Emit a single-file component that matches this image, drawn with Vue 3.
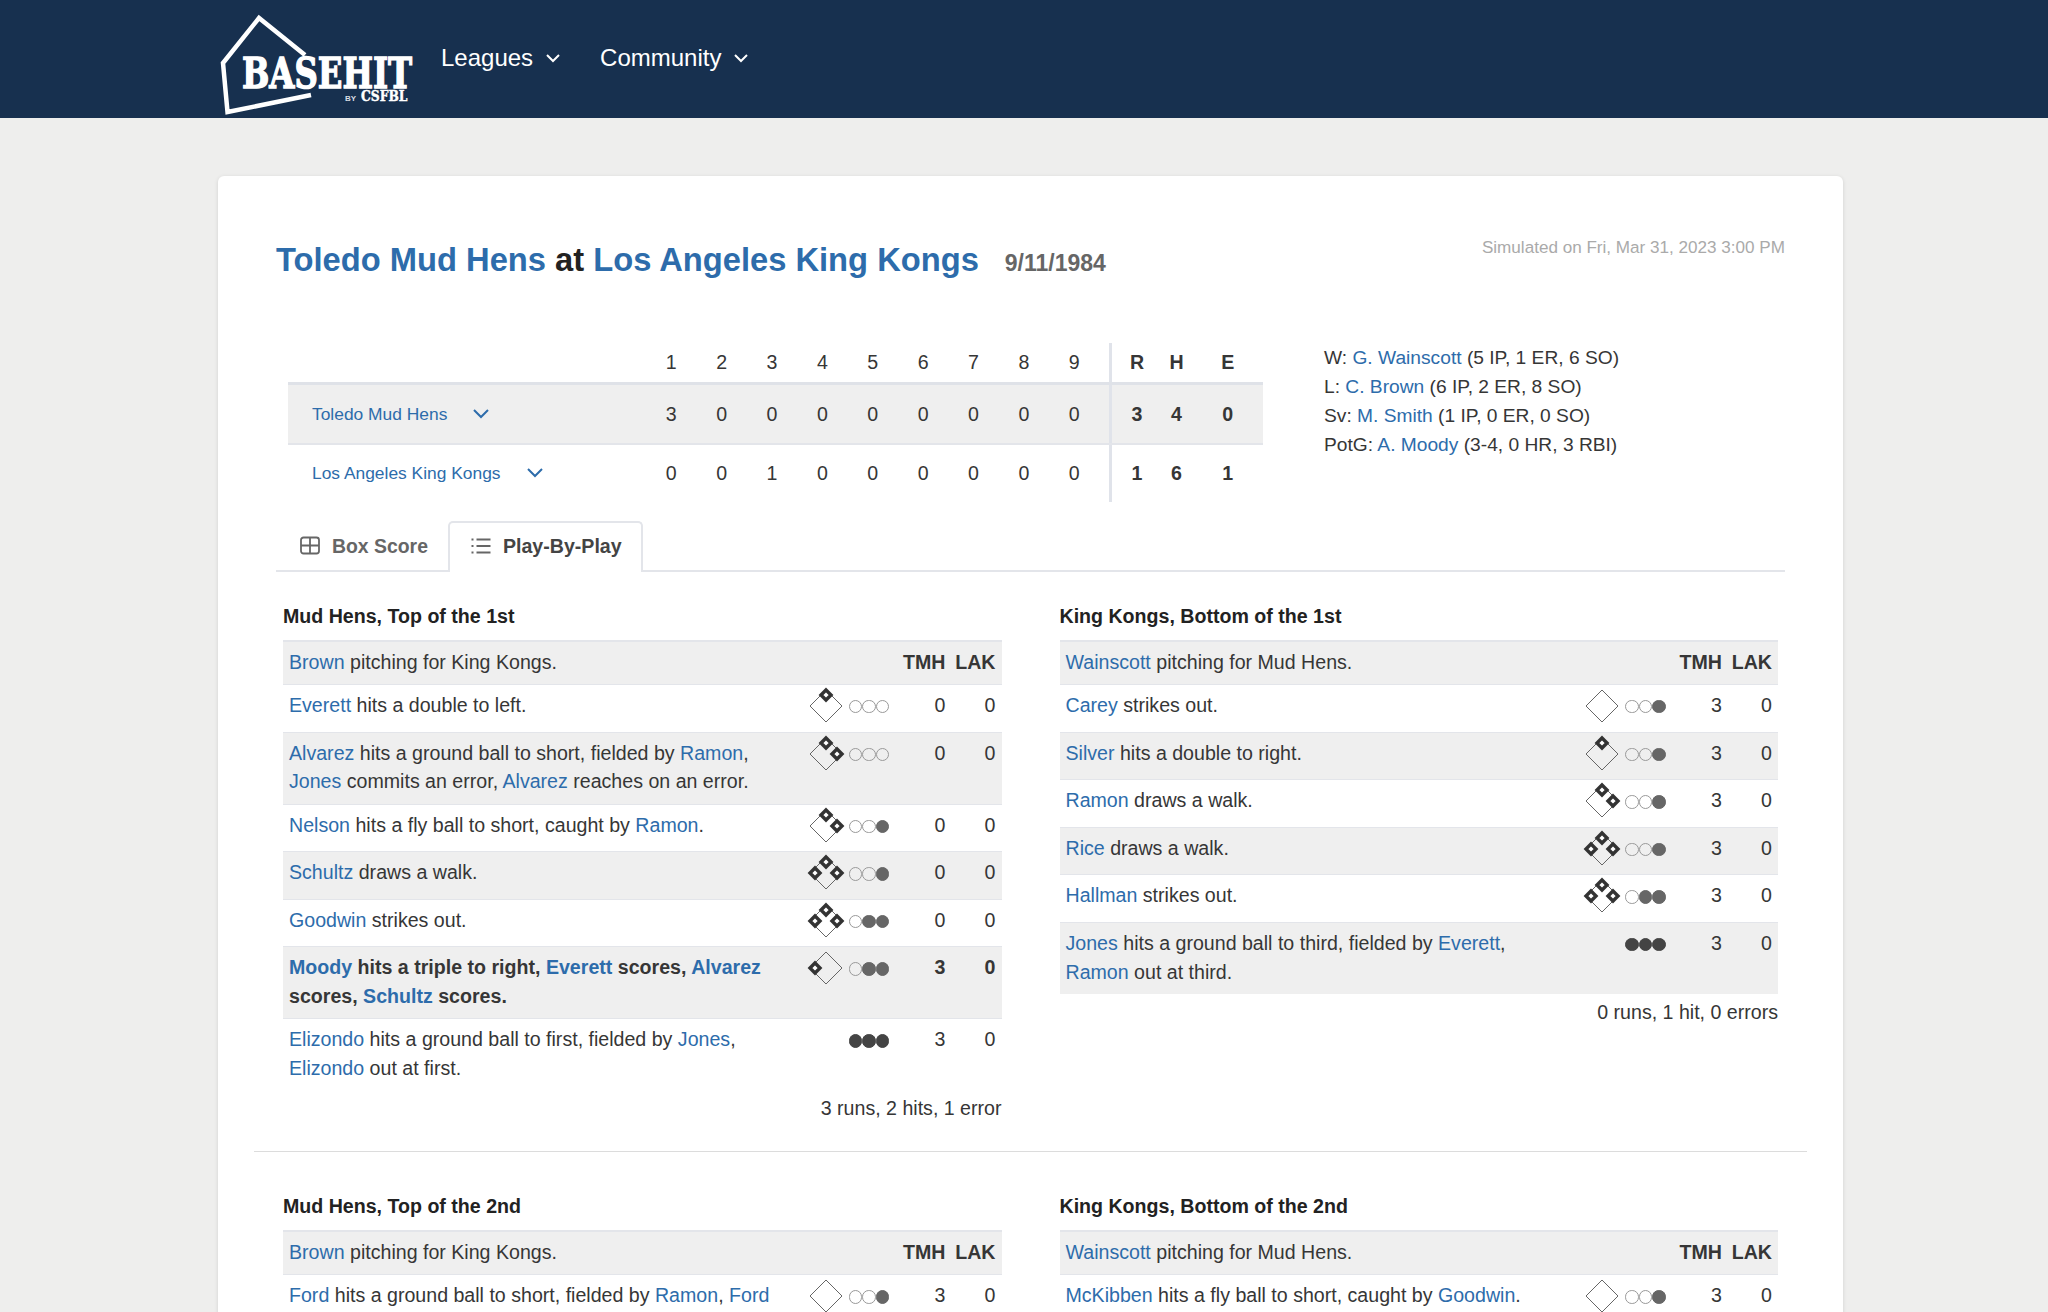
<script setup>
const innings = [1, 2, 3, 4, 5, 6, 7, 8, 9]

const teams = [
  { name: 'Toledo Mud Hens', scores: [3, 0, 0, 0, 0, 0, 0, 0, 0], totals: [3, 4, 0] },
  { name: 'Los Angeles King Kongs', scores: [0, 0, 1, 0, 0, 0, 0, 0, 0], totals: [1, 6, 1] }
]

const pitchers = [
  { label: 'W:', name: 'G. Wainscott', line: '(5 IP, 1 ER, 6 SO)' },
  { label: 'L:', name: 'C. Brown', line: '(6 IP, 2 ER, 8 SO)' },
  { label: 'Sv:', name: 'M. Smith', line: '(1 IP, 0 ER, 0 SO)' },
  { label: 'PotG:', name: 'A. Moody', line: '(3-4, 0 HR, 3 RBI)' }
]

// bases: 1 first, 2 second, 3 third. bases null hides the diamond
const sections = [
  [
    {
      title: 'Mud Hens, Top of the 1st',
      pitcher: '[Brown] pitching for King Kongs.',
      rows: [
        { text: '[Everett] hits a double to left.', bases: [2], outs: 0, a: 0, b: 0 },
        { text: '[Alvarez] hits a ground ball to short, fielded by [Ramon], [Jones] commits an error, [Alvarez] reaches on an error.', bases: [1, 2], outs: 0, a: 0, b: 0 },
        { text: '[Nelson] hits a fly ball to short, caught by [Ramon].', bases: [1, 2], outs: 1, a: 0, b: 0 },
        { text: '[Schultz] draws a walk.', bases: [1, 2, 3], outs: 1, a: 0, b: 0 },
        { text: '[Goodwin] strikes out.', bases: [1, 2, 3], outs: 2, a: 0, b: 0 },
        { text: '[Moody] hits a triple to right, [Everett] scores, [Alvarez] scores, [Schultz] scores.', bases: [3], outs: 2, a: 3, b: 0, bold: true },
        { text: '[Elizondo] hits a ground ball to first, fielded by [Jones], [Elizondo] out at first.', bases: null, outs: 3, a: 3, b: 0 }
      ],
      summary: '3 runs, 2 hits, 1 error'
    },
    {
      title: 'King Kongs, Bottom of the 1st',
      pitcher: '[Wainscott] pitching for Mud Hens.',
      rows: [
        { text: '[Carey] strikes out.', bases: [], outs: 1, a: 3, b: 0 },
        { text: '[Silver] hits a double to right.', bases: [2], outs: 1, a: 3, b: 0 },
        { text: '[Ramon] draws a walk.', bases: [1, 2], outs: 1, a: 3, b: 0 },
        { text: '[Rice] draws a walk.', bases: [1, 2, 3], outs: 1, a: 3, b: 0 },
        { text: '[Hallman] strikes out.', bases: [1, 2, 3], outs: 2, a: 3, b: 0 },
        { text: '[Jones] hits a ground ball to third, fielded by [Everett], [Ramon] out at third.', bases: null, outs: 3, a: 3, b: 0 }
      ],
      summary: '0 runs, 1 hit, 0 errors'
    }
  ],
  [
    {
      title: 'Mud Hens, Top of the 2nd',
      pitcher: '[Brown] pitching for King Kongs.',
      rows: [
        { text: '[Ford] hits a ground ball to short, fielded by [Ramon], [Ford] out at first.', bases: [], outs: 1, a: 3, b: 0 }
      ]
    },
    {
      title: 'King Kongs, Bottom of the 2nd',
      pitcher: '[Wainscott] pitching for Mud Hens.',
      rows: [
        { text: '[McKibben] hits a fly ball to short, caught by [Goodwin].', bases: [], outs: 1, a: 3, b: 0 }
      ]
    }
  ]
]

const basePoints = { 1: [30, 19], 2: [19, 8], 3: [8, 19] }

const parts = (text) =>
  text.split(/(\[[^\]]+\])/).filter(Boolean).map((p) =>
    p[0] === '[' ? { link: true, value: p.slice(1, -1) } : { link: false, value: p }
  )

const diamond = ([x, y], r) => `${x},${y - r} ${x + r},${y} ${x},${y + r} ${x - r},${y}`
</script>

<template>
  <header class="topbar">
    <svg class="logo" viewBox="0 0 200 118" width="200" height="118">
      <polyline class="house" points="93,95 9.500,112 5,63 41,18 87,55" />
      <text class="logo-main" transform="translate(24,88) scale(0.77,1)">BASEHIT</text>
      <text class="logo-by" x="127" y="101">BY</text>
      <text class="logo-csfbl" transform="translate(143,101) scale(0.88,1)">CSFBL</text>
    </svg>
    <nav class="nav">
      <a class="nav-item">Leagues
        <svg width="16" height="10" viewBox="0 0 16 10"><path d="M2 2l6 6 6-6" /></svg>
      </a>
      <a class="nav-item">Community
        <svg width="16" height="10" viewBox="0 0 16 10"><path d="M2 2l6 6 6-6" /></svg>
      </a>
    </nav>
  </header>

  <main class="card">
    <div class="title-row">
      <h1 class="title">
        <a>Toledo Mud Hens</a> at <a>Los Angeles King Kongs</a>
        <span class="date">9/11/1984</span>
      </h1>
      <div class="simulated">Simulated on Fri, Mar 31, 2023 3:00 PM</div>
    </div>

    <div class="score-area">
      <div class="scoreboard">
        <div class="score-line score-head">
          <div></div>
          <div v-for="i in innings" :key="i" class="cell">{{ i }}</div>
          <div class="total-first cell strong">R</div>
          <div class="cell strong">H</div>
          <div class="cell strong total-last">E</div>
        </div>
        <div v-for="team in teams" :key="team.name" class="score-line score-team">
          <div class="team-name">
            <a>{{ team.name }}</a>
            <svg width="18" height="12" viewBox="0 0 18 12"><path d="M2 2l7 7 7-7" /></svg>
          </div>
          <div v-for="(s, i) in team.scores" :key="i" class="cell">{{ s }}</div>
          <div class="total-first cell strong">{{ team.totals[0] }}</div>
          <div class="cell strong">{{ team.totals[1] }}</div>
          <div class="cell strong total-last">{{ team.totals[2] }}</div>
        </div>
      </div>
      <div class="pitchers">
        <div v-for="p in pitchers" :key="p.label">{{ p.label }} <a>{{ p.name }}</a> {{ p.line }}</div>
      </div>
    </div>

    <div class="tabs">
      <a class="tab">
        <svg width="20" height="20" viewBox="0 0 20 20">
          <rect x="1" y="1.500" width="18" height="16" rx="2.500" />
          <path d="M1 9.500h18M10 1.500v16" />
        </svg>
        Box Score
      </a>
      <a class="tab tab-active">
        <svg width="20" height="20" viewBox="0 0 20 20">
          <path d="M5.500 3.500h14M5.500 10h14M5.500 16.500h14M0.500 3.500h2M0.500 10h2M0.500 16.500h2" />
        </svg>
        Play-By-Play
      </a>
    </div>

    <template v-for="(inning, n) in sections" :key="n">
      <hr v-if="n > 0" class="divider" />
      <div class="inning">
        <section v-for="half in inning" :key="half.title" class="half">
          <h3 class="half-title">{{ half.title }}</h3>
          <div class="play play-head">
            <div class="play-text">
              <template v-for="(p, i) in parts(half.pitcher)" :key="i"><a v-if="p.link">{{ p.value }}</a><template v-else>{{ p.value }}</template></template>
            </div>
            <div></div>
            <div class="num">TMH</div>
            <div class="num">LAK</div>
          </div>
          <div v-for="(row, r) in half.rows" :key="r" class="play" :class="{ striped: r % 2 === 1, bold: row.bold }">
            <div class="play-text">
              <template v-for="(p, i) in parts(row.text)" :key="i"><a v-if="p.link">{{ p.value }}</a><template v-else>{{ p.value }}</template></template>
            </div>
            <div class="situation">
              <svg class="bases" width="38" height="38" viewBox="0 0 38 38">
                <template v-if="row.bases">
                  <polygon class="infield" points="19,3 35,19 19,35 3,19" />
                  <polygon v-for="b in row.bases" :key="b" class="base" :points="diamond(basePoints[b], 5)" />
                </template>
              </svg>
              <div class="outs">
                <span v-for="o in 3" :key="o" class="out" :class="{ on: o > 3 - row.outs, all: row.outs === 3 }"></span>
              </div>
            </div>
            <div class="num">{{ row.a }}</div>
            <div class="num">{{ row.b }}</div>
          </div>
          <div v-if="half.summary" class="summary">{{ half.summary }}</div>
        </section>
      </div>
    </template>
  </main>
</template>

<style>
html, body {
  margin: 0;
  height: 1312px;
  overflow: hidden;
  background: #eeeeed;
}
</style>

<style scoped>
.topbar {
  display: flex;
  align-items: center;
  height: 118px;
  padding-left: 218px;
  background: #17304f;
  font-family: "Liberation Sans", Arial, sans-serif;
}

.logo {
  display: block;
}

.house {
  fill: none;
  stroke: #fff;
  stroke-width: 4.500;
}

.logo-main {
  font-family: "DejaVu Serif", serif;
  font-weight: 700;
  font-size: 42px;
  fill: #fff;
  stroke: #fff;
  stroke-width: 1.400;
}

.logo-by {
  font-family: "Liberation Sans", sans-serif;
  font-size: 8px;
  font-weight: 700;
  fill: #d8dde3;
}

.logo-csfbl {
  font-family: "DejaVu Serif", serif;
  font-size: 14px;
  font-weight: 700;
  fill: #fff;
  stroke: #fff;
  stroke-width: 0.400;
}

.nav {
  display: flex;
  gap: 39px;
  margin-left: 23px;
  margin-bottom: 2px;
}

.nav-item {
  display: flex;
  align-items: center;
  gap: 12px;
  color: #fff;
  font-size: 24px;
}

.nav-item svg path {
  fill: none;
  stroke: #fff;
  stroke-width: 2;
}

.card {
  width: 1625px;
  box-sizing: border-box;
  margin: 58px 0 0 218px;
  padding: 58px 58px 0;
  background: #fff;
  border-radius: 6px;
  box-shadow: 0 1px 4px rgba(0, 0, 0, 0.12);
  color: #363636;
  font-family: "Liberation Sans", Arial, sans-serif;
  font-size: 19.600px;
  line-height: 28.800px;
}

a {
  color: #2d6cab;
  text-decoration: none;
}

.title-row {
  display: flex;
  justify-content: space-between;
  align-items: flex-start;
}

.title {
  margin: 0;
  font-size: 32.700px;
  line-height: 52px;
  font-weight: 700;
  color: #222;
}

.date {
  margin-left: 26px;
  font-size: 23px;
  color: #666;
}

.simulated {
  color: #aaa;
  font-size: 17.100px;
}

.score-area {
  display: flex;
  margin-top: 54px;
  padding-left: 12px;
}

.scoreboard {
  width: 975px;
}

.score-line {
  display: grid;
  grid-template-columns: 358px repeat(9, 50.400px) 9px 54px 28px 1fr;
  align-items: center;
}

.score-line .total-first {
  grid-column: 12;
  align-self: stretch;
  display: flex;
  align-items: center;
  justify-content: center;
  border-left: 3px solid #e0e3ea;
}

.total-last {
  padding-left: 2px;
}

.score-head {
  height: 42px;
  border-bottom: 3px solid #dfe2e8;
  box-sizing: border-box;
}

.score-team {
  height: 57px;
  box-sizing: border-box;
}

.score-team:nth-child(2) {
  height: 60px;
  background: #efefef;
  border-bottom: 2px solid #e3e5ea;
}

.cell {
  text-align: center;
}

.strong {
  font-weight: 700;
}

.team-name {
  display: flex;
  align-items: center;
  gap: 25px;
  padding-left: 24px;
  font-size: 17.400px;
}

.team-name svg path {
  fill: none;
  stroke: #2d6cab;
  stroke-width: 2;
}

.pitchers {
  margin-left: 61px;
  margin-top: 0;
  font-size: 19.200px;
  line-height: 29px;
}

.tabs {
  display: flex;
  align-items: flex-end;
  height: 49px;
  margin-top: 19px;
  padding-left: 8px;
  border-bottom: 2px solid #e3e5ea;
}

.tab {
  display: flex;
  align-items: center;
  gap: 12px;
  height: 51px;
  margin-bottom: -2px;
  box-sizing: border-box;
  padding: 0 18px 3px 14px;
  border: 2px solid transparent;
  border-bottom: 0;
  color: #666;
  font-size: 19.400px;
  font-weight: 700;
}

.tab svg rect,
.tab svg path {
  fill: none;
  stroke: #666;
  stroke-width: 1.800;
}

.tab-active {
  padding: 0 19px 3px 21px;
  background: #fff;
  border-color: #e3e5ea;
  border-radius: 5px 5px 0 0;
  color: #444;
  font-size: 19.600px;
}

.divider {
  margin: 28px -22px 10px;
  border: 0;
  border-top: 1px solid #dcdcdc;
}

.inning {
  display: flex;
  gap: 58px;
  padding: 0 7px;
}

.half {
  flex: 1;
  min-width: 0;
}

.half-title {
  margin: 30px 0 9px;
  font-size: 19.600px;
  line-height: 28.800px;
  font-weight: 700;
  color: #222;
}

.play {
  display: grid;
  grid-template-columns: 1fr 82px 55px 50px;
  box-sizing: border-box;
  min-height: 47.600px;
  padding: 6px 6px 7.400px;
  border-top: 1px solid #e3e5ea;
}

.play-head {
  min-height: 44px;
  background: #efefef;
  border-top-width: 2px;
  font-weight: 700;
}

.play-head .play-text {
  font-weight: 400;
}

.striped {
  background: #efefef;
}

.bold {
  font-weight: 700;
}

.play-text {
  padding-right: 20px;
}

.num {
  text-align: right;
}

.situation {
  display: flex;
  align-items: flex-start;
  height: 28.800px;
}

.bases {
  flex: none;
  margin: -4px 0 0 -2px;
}

.infield {
  fill: none;
  stroke: #666;
  stroke-width: 1;
}

.base {
  fill: #fff;
  stroke: #333;
  stroke-width: 3.400;
}

.outs {
  display: flex;
  margin: 9px 0 0 4.400px;
}

.out {
  width: 13.500px;
  height: 13.500px;
  box-sizing: border-box;
  border: 1.300px solid #999;
  border-radius: 50%;
}

.out.on {
  background: #666;
  border-color: #666;
}

.out.all {
  background: #444;
  border-color: #444;
}

.summary {
  margin-top: 4px;
  text-align: right;
}
</style>
